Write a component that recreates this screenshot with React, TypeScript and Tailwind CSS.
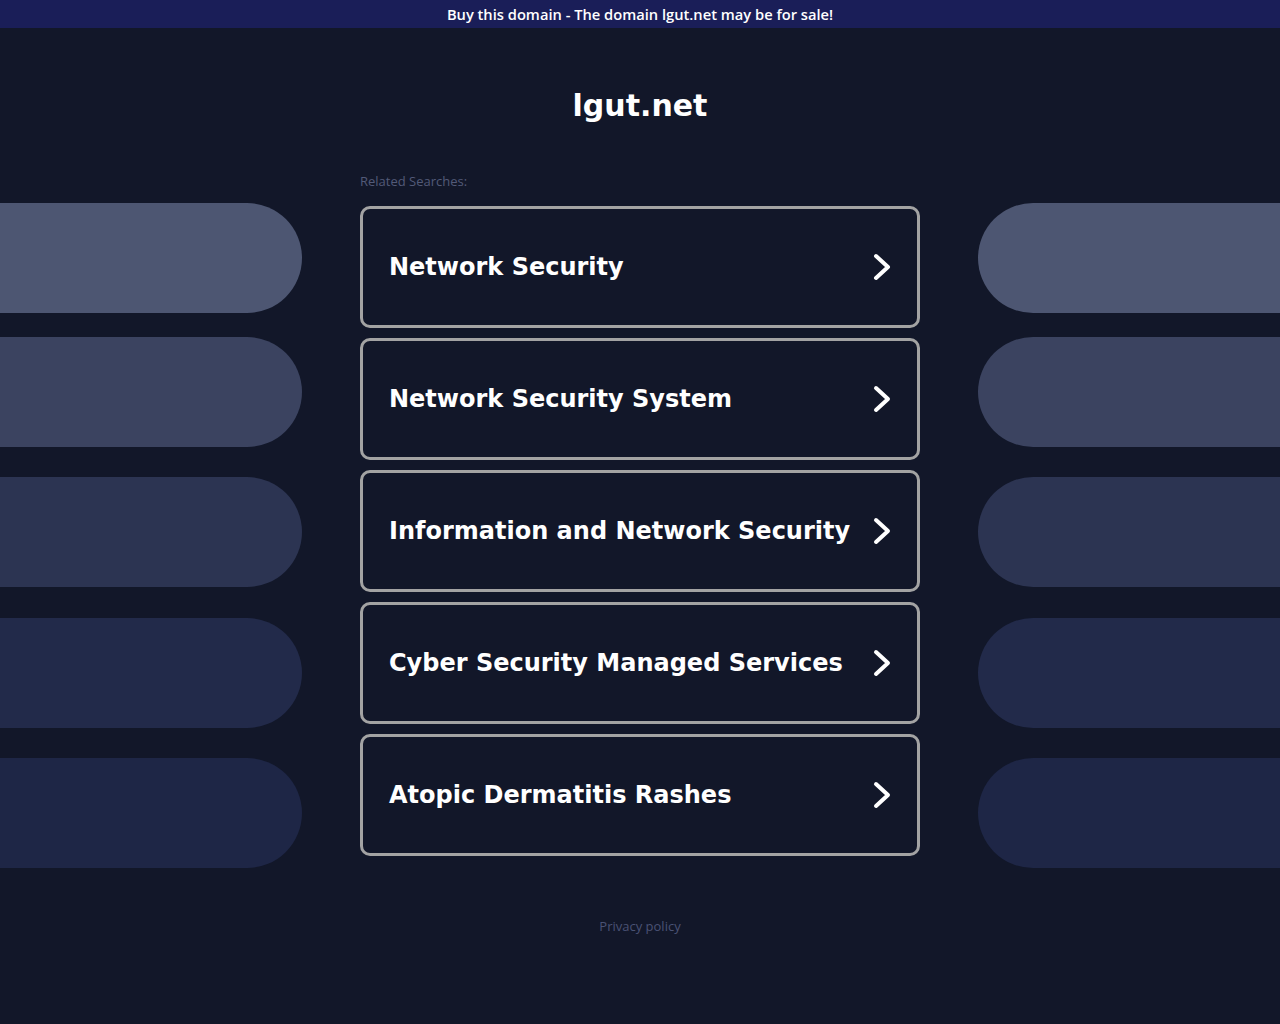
const searches = [
  "Network Security",
  "Network Security System",
  "Information and Network Security",
  "Cyber Security Managed Services",
  "Atopic Dermatitis Rashes",
];

const pills = [
  { mt: "mt-[175px]", bg: "bg-[#4d5672]" },
  { mt: "mt-[24px]", bg: "bg-[#3b4360]" },
  { mt: "mt-[30px]", bg: "bg-[#2c3452]" },
  { mt: "mt-[31px]", bg: "bg-[#222a4a]" },
  { mt: "mt-[30px]", bg: "bg-[#1e2646]" },
];

function Chevron() {
  return (
    <svg width="20" height="30" viewBox="0 0 20 30" fill="none">
      <path d="M4 4 L16 15 L4 26" stroke="white" strokeWidth="4" strokeLinecap="round" strokeLinejoin="round" />
    </svg>
  );
}

export default function App() {
  return (
    <div className="min-h-screen bg-[#121729] font-['DejaVu_Sans',sans-serif]">
      <div className="h-7 bg-[#1a1e58] flex items-center justify-center text-[14.7px] text-white font-['Open_Sans',sans-serif] font-semibold">
        Buy this domain - The domain lgut.net may be for sale!
      </div>

      <div className="flex">
        <div className="w-[302px] flex flex-col">
          {pills.map((p, i) => (
            <div key={i} className={`${p.mt} ${p.bg} h-[110px] rounded-r-[55px]`} />
          ))}
        </div>

        <div className="w-[560px] mx-[58px] flex flex-col">
          <h1 className="mt-[58px] text-center text-white font-bold text-[30px] leading-[40px]">lgut.net</h1>
          <div className="mt-[47px] text-[13px] text-[#525a78] font-['Open_Sans',sans-serif] leading-[16px]">
            Related Searches:
          </div>
          <div className="mt-[17px] flex flex-col gap-[10px]">
            {searches.map((s) => (
              <a
                key={s}
                href="#"
                className="h-[122px] border-[3px] border-[#a3a3a3] rounded-[10px] flex items-center justify-between pl-[26px] pr-[25px] text-white font-bold text-[24px]"
              >
                <span>{s}</span>
                <Chevron />
              </a>
            ))}
          </div>
          <div className="mt-[61px] text-center text-[13px] text-[#4a5274] font-['Open_Sans',sans-serif]">
            Privacy policy
          </div>
        </div>

        <div className="w-[302px] flex flex-col">
          {pills.map((p, i) => (
            <div key={i} className={`${p.mt} ${p.bg} h-[110px] rounded-l-[55px]`} />
          ))}
        </div>
      </div>
    </div>
  );
}
